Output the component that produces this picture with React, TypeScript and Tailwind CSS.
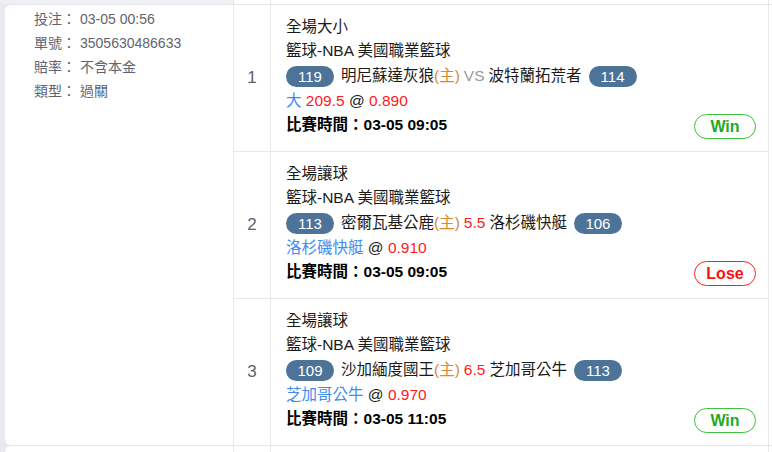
const font = { fontFamily: '"Liberation Sans", "Noto Sans CJK TC", sans-serif' }

type Leg = {
  no: number
  market: string
  league: string
  homeScore: number
  home: string
  mid: 'vs' | string
  away: string
  awayScore: number
  pick: string
  pickRed?: string
  odds: string
  time: string
  result: 'Win' | 'Lose'
}

const legs: Leg[] = [
  { no: 1, market: '全場大小', league: '籃球-NBA 美國職業籃球', homeScore: 119, home: '明尼蘇達灰狼', mid: 'vs', away: '波特蘭拓荒者', awayScore: 114, pick: '大', pickRed: '209.5', odds: '0.890', time: '03-05 09:05', result: 'Win' },
  { no: 2, market: '全場讓球', league: '籃球-NBA 美國職業籃球', homeScore: 113, home: '密爾瓦基公鹿', mid: '5.5', away: '洛杉磯快艇', awayScore: 106, pick: '洛杉磯快艇', odds: '0.910', time: '03-05 09:05', result: 'Lose' },
  { no: 3, market: '全場讓球', league: '籃球-NBA 美國職業籃球', homeScore: 109, home: '沙加緬度國王', mid: '6.5', away: '芝加哥公牛', awayScore: 113, pick: '芝加哥公牛', odds: '0.970', time: '03-05 11:05', result: 'Win' },
]

const info = [
  ['投注：', '03-05 00:56'],
  ['單號：', '3505630486633'],
  ['賠率：', '不含本金'],
  ['類型：', '過關'],
]

function Score({ n }: { n: number }) {
  return (
    <span className="inline-flex items-center justify-center w-[48px] h-[21px] rounded-full bg-[#4d7398] text-white text-[15px] leading-none">
      {n}
    </span>
  )
}

function LegRow({ leg, last }: { leg: Leg; last: boolean }) {
  return (
    <div className={`flex ${last ? '' : 'border-b border-[#e6e8ec]'}`}>
      <div className="w-[37px] flex items-center justify-center border-r border-[#e6e8ec] text-[17px] text-[#5a6270]">
        {leg.no}
      </div>
      <div className="flex-1 relative pl-[15px] pr-[12px] pt-[10px] pb-[14px] text-[15.5px] leading-[24px] text-[#1a1a1a]">
        <div>{leg.market}</div>
        <div>{leg.league}</div>
        <div className="flex items-center h-[26px]">
          <Score n={leg.homeScore} />
          <span className="ml-[7px]">{leg.home}</span>
          <span className="text-[#d98a2b]">(主)</span>
          {leg.mid === 'vs' ? (
            <span className="text-[#999] mx-[4px]">VS</span>
          ) : (
            <span className="text-[#ff1a1a] mx-[4px]">{leg.mid}</span>
          )}
          <span className="mr-[7px]">{leg.away}</span>
          <Score n={leg.awayScore} />
        </div>
        <div>
          <span className="text-[#3d8cf0]">{leg.pick}</span>
          {leg.pickRed && <span className="text-[#ff1a1a]"> {leg.pickRed}</span>}
          <span> @ </span>
          <span className="text-[#ff1a1a]">{leg.odds}</span>
        </div>
        <div className="font-bold text-black">比賽時間：{leg.time}</div>
        <span
          className={`absolute right-[12px] bottom-[12px] w-[62px] h-[25px] rounded-full border flex items-center justify-center font-bold text-[16px] leading-none ${
            leg.result === 'Win' ? 'border-[#3cc23c] text-[#1faa1f]' : 'border-[#ff2020] text-[#ff0f0f]'
          }`}
        >
          {leg.result}
        </span>
      </div>
    </div>
  )
}

export default function App() {
  return (
    <div style={font} className="w-[772px] h-[452px] overflow-hidden bg-white">
      {/* tail of previous ticket */}
      <div className="flex h-[5px] border-b border-[#e6e8ec]">
        <div className="w-[234px] bg-[#eef0f4] border-r border-[#e6e8ec]" />
        <div className="w-[37px] border-r border-[#e6e8ec]" />
        <div className="w-[498px] border-r border-[#e6e8ec]" />
      </div>

      <div className="flex bg-[#e8eaef] pl-[5px] border-b border-[#e6e8ec]">
        <div className="w-[229px] bg-white rounded-l-[6px] border-r border-[#e6e8ec] pl-[29px] pt-[2px] text-[14px] leading-[24px] text-[#5f6470]">
          {info.map(([k, v]) => (
            <div key={k} className="flex">
              <span className="w-[46px]">{k}</span>
              <span>{v}</span>
            </div>
          ))}
        </div>
        <div className="w-[535px] bg-white border-r border-[#e6e8ec]">
          {legs.map((l, i) => (
            <LegRow key={l.no} leg={l} last={i === legs.length - 1} />
          ))}
        </div>
        <div className="flex-1 bg-white" />
      </div>

      {/* next ticket */}
      <div className="flex bg-[#e8eaef] pl-[5px] h-[20px]">
        <div className="w-[229px] bg-white rounded-tl-[6px] border-r border-[#e6e8ec]" />
        <div className="w-[37px] bg-white border-r border-[#e6e8ec]" />
        <div className="w-[498px] bg-white border-r border-[#e6e8ec]" />
        <div className="flex-1 bg-white" />
      </div>
    </div>
  )
}
